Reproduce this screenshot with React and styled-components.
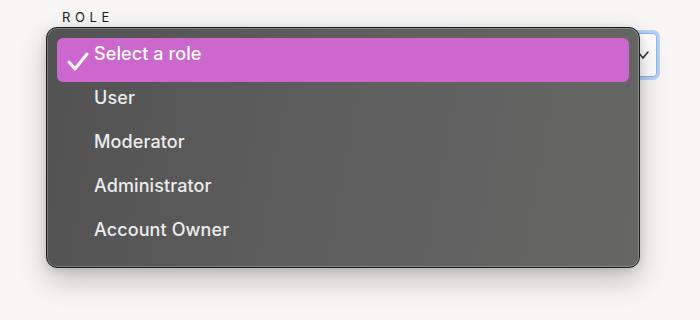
import styled, { createGlobalStyle } from 'styled-components';

const GlobalStyle = createGlobalStyle`
  html, body {
    margin: 0;
    padding: 0;
    background: #f7f6f4;
    font-family: Inter, "Noto Sans", sans-serif;
  }
`;

const Page = styled.div`
  width: 700px;
  height: 320px;
  box-sizing: border-box;
  padding: 10px 43px 0 62px;
`;

const Label = styled.div`
  font-size: 13px;
  font-weight: 400;
  letter-spacing: 4.6px;
  color: #1d1d1d;
  line-height: 15px;
  margin-bottom: 8px;
`;

const SelectBox = styled.div`
  position: relative;
  height: 44px;
  background: #fff;
  border: 1px solid #8db6f0;
  border-radius: 4px;
  box-shadow: 0 0 0 3px #b9d2f7;
  display: flex;
  align-items: center;
  justify-content: flex-end;
  padding-right: 6px;
  box-sizing: border-box;
`;

const Chevron = styled.svg`
  width: 14px;
  height: 10px;
`;

const Menu = styled.ul`
  position: absolute;
  top: -7px;
  left: -17px;
  right: 16px;
  height: 241px;
  margin: 0;
  padding: 10px 10px;
  box-sizing: border-box;
  list-style: none;
  border-radius: 11px;
  background: linear-gradient(100deg, #525252 0%, #5e5e5e 45%, #666665 100%);
  border: 1px solid #1c1c1c;
  box-shadow: inset 0 0 0 1px rgba(255, 255, 255, 0.22),
    0 12px 28px rgba(0, 0, 0, 0.22), 0 2px 8px rgba(0, 0, 0, 0.12);
`;

const Option = styled.li`
  position: relative;
  height: 44px;
  padding: 5px 0 0 37px;
  box-sizing: border-box;
  border-radius: 6px;
  font-size: 18px;
  font-weight: 500;
  letter-spacing: 0.1px;
  line-height: 22px;
  color: ${(props) => (props.$selected ? '#ffffff' : '#ececec')};
  background: ${(props) => (props.$selected ? '#cb67cd' : 'transparent')};
`;

const Check = styled.svg`
  position: absolute;
  left: 10px;
  top: 14px;
  width: 22px;
  height: 20px;
`;

const roles = ['Select a role', 'User', 'Moderator', 'Administrator', 'Account Owner'];

function App() {
  return (
    <>
      <GlobalStyle />
      <Page>
        <Label>ROLE</Label>
        <SelectBox>
          <Chevron viewBox="0 0 14 10">
            <path d="M2 2 L7 8 L12 2" fill="none" stroke="#3a3a3a" strokeWidth="1.6" strokeLinecap="round" />
          </Chevron>
          <Menu>
            {roles.map((role, i) => (
              <Option key={role} $selected={i === 0}>
                {i === 0 && (
                  <Check viewBox="0 0 22 20">
                    <path d="M2 10 L8 17 L20 2" fill="none" stroke="#fff" strokeWidth="3" strokeLinecap="round" strokeLinejoin="round" />
                  </Check>
                )}
                {role}
              </Option>
            ))}
          </Menu>
        </SelectBox>
      </Page>
    </>
  );
}

export default App;
